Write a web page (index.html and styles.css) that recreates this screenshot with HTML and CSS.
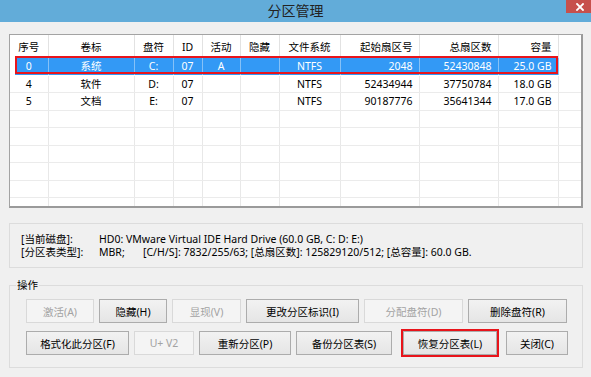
FILE: index.html
```html
<!DOCTYPE html>
<html lang="zh-CN">
<head>
  <meta charset="utf-8">
  <meta name="viewport" content="width=device-width,initial-scale=1" />
  <title>分区管理</title>
  <link rel="stylesheet" href="styles.css">
</head>

<body>
<div class="window">
  <div class="titlebar">
    <span></span>
    <span class="title">分区管理</span>
    <span class="close">
      <svg width="8" height="8" viewBox="0 0 8 8"><path d="M1 1L7 7M7 1L1 7" stroke="#fff" stroke-width="1.8" stroke-linecap="square"/></svg>
    </span>
  </div>

  <div class="content">
    <div class="list-box">
      <table class="parts">
        <colgroup>
          <col class="w38"><col class="w86"><col class="w39"><col class="w29"><col class="w38">
          <col class="w39"><col class="w61"><col class="w79"><col class="w79"><col class="w60"><col>
        </colgroup>
        <thead>
          <tr>
            <th>序号</th><th>卷标</th><th>盘符</th><th>ID</th><th>活动</th><th>隐藏</th>
            <th>文件系统</th><th class="r">起始扇区号</th><th class="r">总扇区数</th><th class="r">容量</th><th></th>
          </tr>
        </thead>
        <tbody>
          <tr class="sel">
            <td class="first">0</td><td>系统</td><td>C:</td><td>07</td><td>A</td><td></td>
            <td>NTFS</td><td class="r">2048</td><td class="r">52430848</td><td class="r">25.0 GB</td><td class="fill"></td>
          </tr>
          <tr>
            <td>4</td><td>软件</td><td>D:</td><td>07</td><td></td><td></td>
            <td>NTFS</td><td class="r">52434944</td><td class="r">37750784</td><td class="r">18.0 GB</td><td></td>
          </tr>
          <tr>
            <td>5</td><td>文档</td><td>E:</td><td>07</td><td></td><td></td>
            <td>NTFS</td><td class="r">90187776</td><td class="r">35641344</td><td class="r">17.0 GB</td><td></td>
          </tr>
          <tr><td></td><td></td><td></td><td></td><td></td><td></td><td></td><td></td><td></td><td></td><td></td></tr>
          <tr><td></td><td></td><td></td><td></td><td></td><td></td><td></td><td></td><td></td><td></td><td></td></tr>
          <tr><td></td><td></td><td></td><td></td><td></td><td></td><td></td><td></td><td></td><td></td><td></td></tr>
          <tr><td></td><td></td><td></td><td></td><td></td><td></td><td></td><td></td><td></td><td></td><td></td></tr>
          <tr><td></td><td></td><td></td><td></td><td></td><td></td><td></td><td></td><td></td><td></td><td></td></tr>
          <tr><td></td><td></td><td></td><td></td><td></td><td></td><td></td><td></td><td></td><td></td><td></td></tr>
        </tbody>
      </table>
      <div class="mark-row"></div>
    </div>

    <div class="info">
      <span>[当前磁盘]:</span>
      <span>HD0: VMware Virtual IDE Hard Drive (60.0 GB, C: D: E:)</span>
      <span>[分区表类型]:</span>
      <span><span class="mbr">MBR;</span>[C/H/S]: 7832/255/63; [总扇区数]: 125829120/512; [总容量]: 60.0 GB.</span>
    </div>

    <fieldset class="ops">
      <legend>操作</legend>
      <div class="row">
        <button class="w68" disabled>激活(A)</button>
        <button class="w68">隐藏(H)</button>
        <button class="w69" disabled>显现(V)</button>
        <button class="w113">更改分区标识(I)</button>
        <button class="w99" disabled>分配盘符(D)</button>
        <button class="w99">删除盘符(R)</button>
      </div>
      <div class="row">
        <button class="w103">格式化此分区(F)</button>
        <button class="w60" disabled>U+ V2</button>
        <button class="w92">重新分区(P)</button>
        <button class="w96">备份分区表(S)</button>
        <button class="w94 marked">恢复分区表(L)</button>
        <button class="w62">关闭(C)</button>
      </div>
    </fieldset>
  </div>
</div>
</body>
</html>
```

FILE: styles.css
```css
body {
  margin: 0;
  background: #f0f0f0;
  font-family: "Noto Sans", "Noto Sans CJK SC", sans-serif;
  font-size: 10.5px;
  color: #000;
}

.titlebar {
  height: 22px;
  background: #62acd9;
  display: grid;
  grid-template-columns: 1fr auto 1fr;
}

.title {
  font-size: 14px;
  line-height: 21px;
  color: #222;
}

.close {
  justify-self: end;
  width: 25px;
  height: 13px;
  background: #c7504c;
  display: flex;
  align-items: center;
  justify-content: center;
  padding-left: 2px;
  box-sizing: border-box;
}

.content {
  padding: 12px 8px 0 9px;
}

/* partition list */
.list-box {
  position: relative;
  height: 171px;
  background: #fff;
  border: 1px solid #a3a3a3;
  border-right: 2px solid #9a9a9a;
  border-bottom: 2px solid #9a9a9a;
  overflow: hidden;
}

.parts {
  width: 100%;
  table-layout: fixed;
  border-collapse: collapse;
}

.parts th,
.parts td {
  padding: 0 6px;
  text-align: center;
  white-space: nowrap;
  overflow: hidden;
  border-right: 1px solid #e8e8e8;
  font-weight: normal;
}

.parts th {
  height: 23px;
  border-right-color: #e2e2e2;
}

.parts td {
  height: 16.5px;
  line-height: 14px;
  border-bottom: 1px solid #ebebeb;
}

.parts .r {
  text-align: right;
}

.parts tr > :last-child {
  border-right: 0;
}

.parts .sel td {
  background: #3399f5;
  color: #fff;
  border-right-color: #86c1f7;
  border-bottom-color: #fff;
}

.parts .sel .first {
  box-shadow: inset 5px 0 #fff;
}

.parts .sel .fill {
  background: #fff;
}

.mark-row {
  position: absolute;
  left: 5px;
  top: 21px;
  width: 539px;
  height: 14px;
  border: 2px solid #e8141b;
  pointer-events: none;
}

col.w38 { width: 38px; }
col.w86 { width: 86px; }
col.w39 { width: 39px; }
col.w29 { width: 29px; }
col.w61 { width: 61px; }
col.w79 { width: 79px; }
col.w60 { width: 60px; }

/* disk info */
.info {
  margin-top: 15px;
  border: 1px solid #dcdcdc;
  padding: 9px 0 9px 11px;
  display: grid;
  grid-template-columns: 78px auto;
  line-height: 12.5px;
}

.mbr {
  display: inline-block;
  width: 44px;
}

/* operations */
.ops {
  margin: 11px 0 0;
  padding: 8px 0 12px 16px;
  border: 1px solid #dcdcdc;
  min-width: 0;
}

.ops legend {
  padding: 0 1px;
  margin-left: -10px;
  line-height: 12px;
}

.row {
  display: flex;
  gap: 5px;
}

.row + .row {
  margin-top: 8px;
}

button {
  height: 24px;
  padding: 0;
  font: inherit;
  color: #000;
  border: 1px solid #acacac;
  background: linear-gradient(#f2f2f2, #e5e5e5);
}

button:disabled {
  color: #a3a3a3;
  border-color: #d9d9d9;
  background: #f4f4f4;
}

button.marked {
  outline: 2px solid #e8141b;
  outline-offset: 0;
  margin: 0 4px 0 6px;
}

button.w60 { width: 60px; }
button.w62 { width: 62px; }
button.w68 { width: 68px; }
button.w69 { width: 69px; }
button.w92 { width: 92px; }
button.w94 { width: 94px; }
button.w96 { width: 96px; }
button.w99 { width: 99px; }
button.w103 { width: 103px; }
button.w113 { width: 113px; }
```
